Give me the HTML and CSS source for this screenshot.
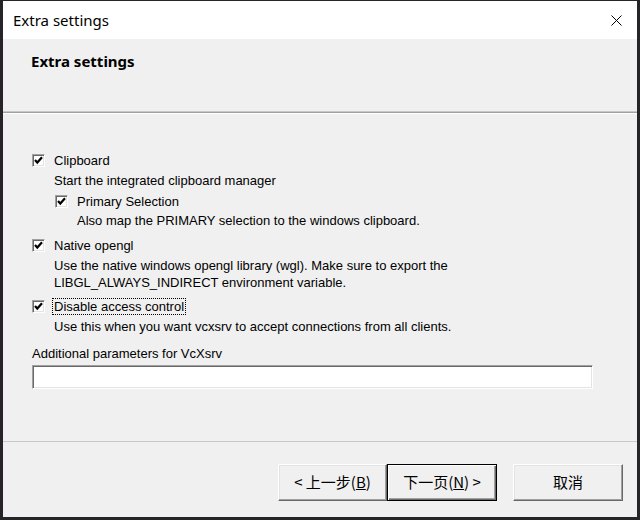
FILE: index.html
```html
<!DOCTYPE html>
<html>
<head>
<meta charset="utf-8">
<link rel="stylesheet" href="styles.css">
</head>
<body>
<div class="window">
  <div class="titlebar">
    <span class="title">Extra settings</span>
    <svg class="close" width="11" height="11" viewBox="0 0 11 11"><path d="M0.5 0.5 L10.5 10.5 M10.5 0.5 L0.5 10.5" stroke="#000" stroke-width="1" fill="none"/></svg>
  </div>
  <div class="header">Extra settings</div>
  <div class="sep"></div>
  <div class="content">
    <div class="opt"><span class="cb"><svg width="9" height="9" viewBox="0 0 9 9"><path d="M1 4 L3.3 6.5 L8 1.3" stroke="#000" stroke-width="2.2" fill="none"/></svg></span><span class="lbl">Clipboard</span></div>
    <div class="desc">Start the integrated clipboard manager</div>
    <div class="opt sub"><span class="cb"><svg width="9" height="9" viewBox="0 0 9 9"><path d="M1 4 L3.3 6.5 L8 1.3" stroke="#000" stroke-width="2.2" fill="none"/></svg></span><span class="lbl">Primary Selection</span></div>
    <div class="desc sub2">Also map the PRIMARY selection to the windows clipboard.</div>
    <div class="opt g"><span class="cb"><svg width="9" height="9" viewBox="0 0 9 9"><path d="M1 4 L3.3 6.5 L8 1.3" stroke="#000" stroke-width="2.2" fill="none"/></svg></span><span class="lbl">Native opengl</span></div>
    <div class="desc">Use the native windows opengl library (wgl). Make sure to export the<br>LIBGL_ALWAYS_INDIRECT environment variable.</div>
    <div class="opt g2"><span class="cb"><svg width="9" height="9" viewBox="0 0 9 9"><path d="M1 4 L3.3 6.5 L8 1.3" stroke="#000" stroke-width="2.2" fill="none"/></svg></span><span class="lbl focus">Disable access control</span></div>
    <div class="desc">Use this when you want vcxsrv to accept connections from all clients.</div>
    <div class="plabel">Additional parameters for VcXsrv</div>
    <div class="input"></div>
  </div>
  <div class="footer">
    <div class="btn">&lt; 上一步(<u>B</u>)</div>
    <div class="btn def">下一页(<u>N</u>) &gt;</div>
    <div class="btn cancel">取消</div>
  </div>
</div>
</body>
</html>
```
FILE: styles.css
```css
html, body {
  margin: 0;
  padding: 0;
  background: #262428;
  width: 640px;
  height: 520px;
  overflow: hidden;
}
.window {
  margin: 1px 0 0 3px;
  width: 634px;
  height: 516px;
  background: #f0f0f0;
  display: flex;
  flex-direction: column;
  font-family: "Liberation Sans", Arial, sans-serif;
  font-size: 13px;
  color: #000;
}
.titlebar {
  height: 38px;
  background: #fff;
  display: flex;
  align-items: center;
  justify-content: space-between;
  padding: 0 15px 0 10px;
}
.title {
  font-family: "Noto Sans", "Open Sans", sans-serif;
  font-size: 15px;
  color: #000;
}
.close {
  display: block;
}
.header {
  height: 72px;
  box-sizing: border-box;
  padding: 12px 0 0 28px;
  font-family: "Noto Sans", "Open Sans", sans-serif;
  font-weight: bold;
  font-size: 15px;
  color: #000;
}
.sep {
  height: 1px;
  background: #a0a0a0;
  border-top: 1px solid #c8c8c8;
  border-bottom: 1px solid #fff;
}
.content {
  padding: 38px 0 0 29px;
  display: flex;
  flex-direction: column;
  line-height: 17px;
}
.opt {
  display: flex;
  align-items: center;
  height: 17px;
}
.opt.sub {
  margin-top: 4px;
  padding-left: 23px;
}
.opt.g {
  margin-top: 8px;
}
.opt.g2 {
  margin-top: 7px;
}
.cb {
  width: 13px;
  height: 13px;
  box-sizing: border-box;
  background: #fff;
  border-top: 1px solid #a0a0a0;
  border-left: 1px solid #a0a0a0;
  border-bottom: 1px solid #fff;
  border-right: 1px solid #fff;
  box-shadow: inset 1px 1px 0 #696969, inset -1px -1px 0 #e3e3e3;
  display: flex;
  align-items: center;
  justify-content: center;
  margin-right: 8px;
}
.cb svg {
  display: block;
}
.lbl {
  padding: 0 1px;
  margin-left: -1px;
  border: 1px solid transparent;
  line-height: 15px;
}
.lbl.focus {
  border: 1px dotted #000;
}
.desc {
  margin-top: 3px;
  padding-left: 22px;
}
.desc.sub2 {
  margin-top: 2px;
  padding-left: 45px;
}
.plabel {
  margin-top: 10px;
}
.input {
  margin-top: 3px;
  width: 561px;
  height: 24px;
  box-sizing: border-box;
  background: #fff;
  border-top: 1px solid #a0a0a0;
  border-left: 1px solid #a0a0a0;
  border-bottom: 1px solid #fff;
  border-right: 1px solid #fff;
  box-shadow: inset 1px 1px 0 #696969, inset -1px -1px 0 #e3e3e3;
}
.footer {
  margin-top: auto;
  height: 76px;
  box-sizing: border-box;
  border-top: 1px solid #c8c8c8;
  display: flex;
  justify-content: flex-end;
  align-items: flex-start;
  padding: 22px 14px 0 0;
}
.btn {
  width: 109px;
  height: 37px;
  box-sizing: border-box;
  background: #f0f0f0;
  border-top: 1px solid #fff;
  border-left: 1px solid #fff;
  border-right: 1px solid #696969;
  border-bottom: 1px solid #696969;
  box-shadow: inset -1px -1px 0 #a0a0a0, inset 1px 1px 0 #e3e3e3;
  display: flex;
  align-items: center;
  justify-content: center;
  padding-bottom: 2px;
  font-family: "Noto Sans CJK SC", "Noto Sans", sans-serif;
  font-size: 15px;
  color: #000;
}
.btn u {
  text-decoration: underline;
  text-underline-offset: 1px;
}
.btn.def {
  width: 110px;
  border: 1px solid #000;
  box-shadow: inset 1px 1px 0 #fff, inset -1px -1px 0 #696969, inset -2px -2px 0 #a0a0a0;
}
.btn.cancel {
  width: 110px;
  margin-left: 16px;
}
```
